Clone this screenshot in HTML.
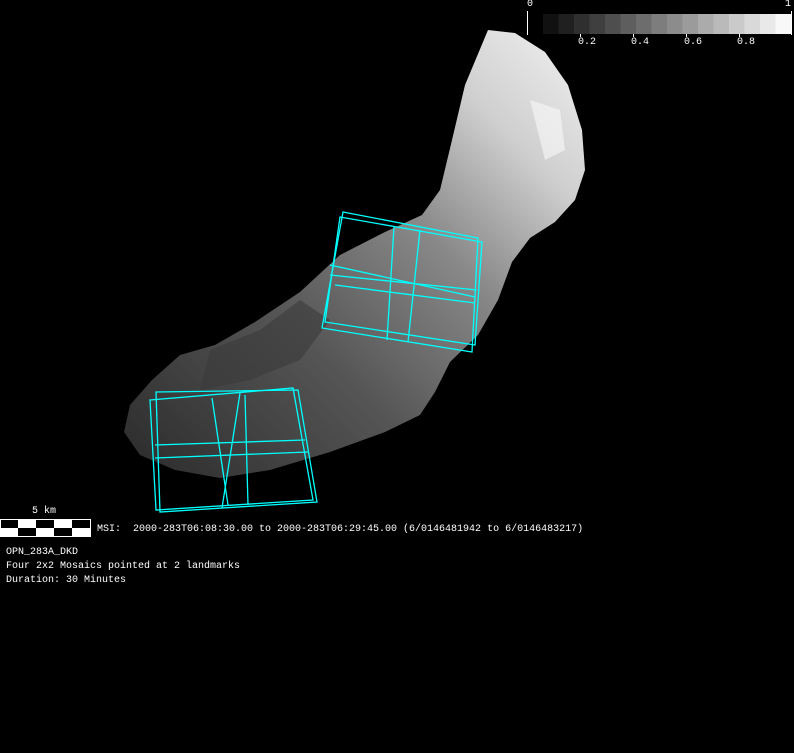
<!DOCTYPE html>
<html><head><meta charset="utf-8"><style>
html,body{margin:0;padding:0;background:#000;width:794px;height:753px;overflow:hidden}
.t{position:absolute;color:#fff;font-family:"Liberation Mono",monospace;font-size:10px;white-space:pre;line-height:14px}
</style></head><body>
<svg width="794" height="753" style="position:absolute;left:0;top:0">
<defs>
<linearGradient id="g" x1="0" y1="1" x2="1" y2="0">
<stop offset="0" stop-color="#2a2a2a"/>
<stop offset="0.35" stop-color="#555"/>
<stop offset="0.6" stop-color="#888"/>
<stop offset="0.8" stop-color="#cfcfcf"/>
<stop offset="1" stop-color="#f2f2f2"/>
</linearGradient>
</defs>
<path d="M488,30 L515,33 L545,52 L568,85 L582,130 L585,170 L575,200 L555,222 L530,238 L512,262 L498,300 L478,335 L450,362 L435,392 L420,415 L385,432 L330,452 L270,470 L220,478 L175,470 L140,455 L124,432 L130,405 L152,380 L180,355 L215,345 L255,322 L300,292 L340,255 L385,232 L422,215 L440,190 L452,140 L465,85 Z" fill="url(#g)"/>
<path d="M210,350 L260,330 L300,300 L330,320 L300,360 L250,380 L200,390 Z" fill="#3a3a3a" opacity="0.6"/>
<path d="M530,100 L560,110 L565,150 L545,160 Z" fill="#fff" opacity="0.5"/>
<g fill="none" stroke="#0ff" stroke-width="1.3">
<path d="M343,212 L478,238 L472,352 L322,328 Z M394,227 L387,340 M330,265 L475,297"/>
<path d="M340,217 L482,242 L475,345 L325,322 Z M420,230 L408,342 M330,275 L477,290 M335,285 L475,303"/>
<path d="M156,392 L298,390 L317,502 L160,512 Z M240,393 L222,508 M155,445 L305,440"/>
<path d="M150,400 L293,388 L313,500 L156,510 Z M212,398 L228,505 M155,458 L308,452 M245,395 L248,505"/>
</g>
<g>
<rect x="543" y="14" width="15.5" height="20" fill="#111"/>
<rect x="558.5" y="14" width="15.5" height="20" fill="#202020"/>
<rect x="574" y="14" width="15.5" height="20" fill="#2f2f2f"/>
<rect x="589.5" y="14" width="15.5" height="20" fill="#3f3f3f"/>
<rect x="605" y="14" width="15.5" height="20" fill="#4e4e4e"/>
<rect x="620.5" y="14" width="15.5" height="20" fill="#5e5e5e"/>
<rect x="636" y="14" width="15.5" height="20" fill="#6d6d6d"/>
<rect x="651.5" y="14" width="15.5" height="20" fill="#7d7d7d"/>
<rect x="667" y="14" width="15.5" height="20" fill="#8c8c8c"/>
<rect x="682.5" y="14" width="15.5" height="20" fill="#9b9b9b"/>
<rect x="698" y="14" width="15.5" height="20" fill="#ababab"/>
<rect x="713.5" y="14" width="15.5" height="20" fill="#bababa"/>
<rect x="729" y="14" width="15.5" height="20" fill="#cacaca"/>
<rect x="744.5" y="14" width="15.5" height="20" fill="#d9d9d9"/>
<rect x="760" y="14" width="15.5" height="20" fill="#e9e9e9"/>
<rect x="775.5" y="14" width="15.5" height="20" fill="#f8f8f8"/>
<rect x="527" y="11" width="1" height="24" fill="#fff"/>
<rect x="791" y="11" width="1" height="24" fill="#fff"/>
<rect x="580" y="34" width="1" height="3" fill="#fff"/>
<rect x="633" y="34" width="1" height="3" fill="#fff"/>
<rect x="686" y="34" width="1" height="3" fill="#fff"/>
<rect x="739" y="34" width="1" height="3" fill="#fff"/>
</g>
<rect x="0" y="519" width="91" height="18" fill="#fff"/>
<rect x="1" y="520" width="17" height="8" fill="#000"/>
<rect x="36" y="520" width="18" height="8" fill="#000"/>
<rect x="72" y="520" width="18" height="8" fill="#000"/>
<rect x="18" y="528" width="18" height="8" fill="#000"/>
<rect x="54" y="528" width="18" height="8" fill="#000"/>
</svg>
<div class="t" style="left:527px;top:-2px">0</div>
<div class="t" style="left:785px;top:-2px">1</div>
<div class="t" style="left:578px;top:36px">0.2</div>
<div class="t" style="left:631px;top:36px">0.4</div>
<div class="t" style="left:684px;top:36px">0.6</div>
<div class="t" style="left:737px;top:36px">0.8</div>
<div class="t" style="left:32px;top:505px">5 km</div>
<div class="t" style="left:97px;top:523px">MSI:  2000-283T06:08:30.00 to 2000-283T06:29:45.00 (6/0146481942 to 6/0146483217)</div>
<div class="t" style="left:6px;top:546px">OPN_283A_DKD</div>
<div class="t" style="left:6px;top:560px">Four 2x2 Mosaics pointed at 2 landmarks</div>
<div class="t" style="left:6px;top:574px">Duration: 30 Minutes</div>
</body></html>
